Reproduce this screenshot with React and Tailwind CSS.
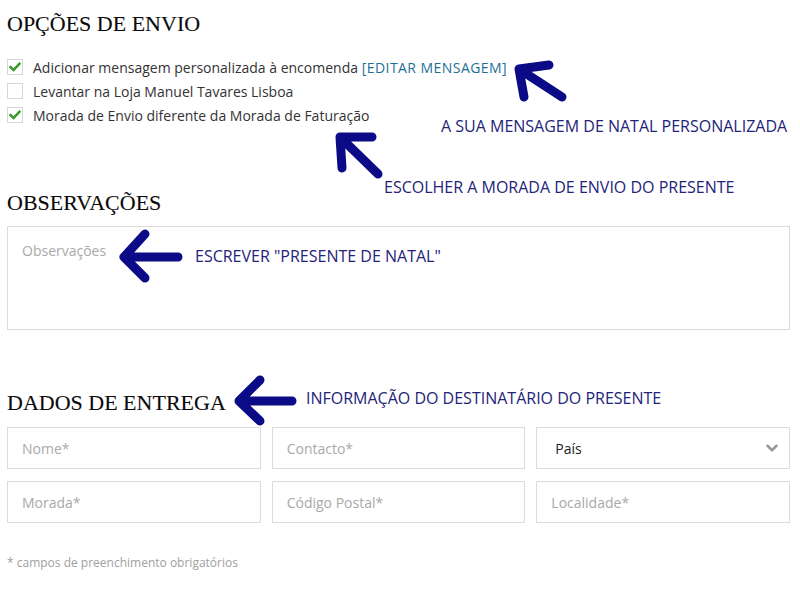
import React from 'react';
import { ChevronDown } from 'lucide-react';

const serif = { fontFamily: '"Liberation Serif", "DejaVu Serif", serif' };

const Check = () => (
  <svg width="12" height="10" viewBox="0 0 12 10">
    <path d="M1.5 5.2 L4.6 8 L10.5 1.8" fill="none" stroke="#3b9a2a" strokeWidth="2.6" strokeLinecap="square" />
  </svg>
);

const Option = ({ checked, children }) => (
  <label className="flex items-center h-[24px] gap-[10px]">
    <span className="w-[16px] h-[16px] border border-[#d6d6d6] bg-white flex items-center justify-center">
      {checked && <Check />}
    </span>
    <span>{children}</span>
  </label>
);

const Field = ({ label, dark, select }) => (
  <div className="h-[42px] border border-[#dcdcdc] flex items-center justify-between pl-[14px] pr-[8px]">
    <span className={dark ? 'text-[#222] pl-[4px]' : 'text-[#a9a9a9]'}>{label}</span>
    {select && <ChevronDown size={18} strokeWidth={3.4} className="text-[#9a9a9a]" />}
  </div>
);

const Note = ({ className, children }) => (
  <span className={'absolute whitespace-nowrap text-[#23237a] font-medium text-[16px] leading-[20px] ' + className}>{children}</span>
);

const Heading = ({ className = '', children }) => (
  <h2 className={'text-[22px] leading-[28px] text-[#0a0a0a] ' + className} style={{ ...serif, WebkitTextStroke: '0.1px #0a0a0a' }}>
    {children}
  </h2>
);

export default function App() {
  return (
    <div
      className="relative w-[800px] h-[595px] bg-white pl-[7px] pr-[10px] pt-[10px] text-[14px] text-[#333] overflow-hidden"
      style={{ fontFamily: '"Open Sans", "Noto Sans", sans-serif' }}
    >
      <Heading>OPÇÕES DE ENVIO</Heading>

      <div className="mt-[17px]">
        <Option checked>
          Adicionar mensagem personalizada à encomenda{' '}
          <span className="text-[#1f6e96] tracking-[0.45px]">[EDITAR MENSAGEM]</span>
        </Option>
        <Option>Levantar na Loja Manuel Tavares Lisboa</Option>
        <Option checked>Morada de Envio diferente da Morada de Faturação</Option>
      </div>

      <Heading className="mt-[62px]">OBSERVAÇÕES</Heading>
      <div className="mt-[9px] h-[104px] border border-[#dcdcdc] px-[14px] py-[13px] text-[#a9a9a9]">Observações</div>

      <Heading className="mt-[59px]">DADOS DE ENTREGA</Heading>
      <div className="mt-[10px] grid grid-cols-3 gap-x-[11px] gap-y-[12px]">
        <Field label="Nome*" />
        <Field label="Contacto*" />
        <Field label="País" dark select />
        <Field label="Morada*" />
        <Field label="Código Postal*" />
        <Field label="Localidade*" />
      </div>

      <p className="mt-[31px] text-[12px] leading-[18px] text-[#a0a0a0]">* campos de preenchimento obrigatórios</p>

      {/* annotations drawn over the form */}
      <svg className="absolute inset-0 pointer-events-none" width="800" height="595">
        <g fill="none" stroke="#0b0b88" strokeWidth="9" strokeLinecap="round" strokeLinejoin="round">
          <path d="M549 65 L519 69 L524 97 M519 69 L562 97" />
          <path d="M372 137 L340 137 L342 168 M340 137 L378 174" />
          <path d="M145 234 L124 257 L145 278 M124 257 L178 257" />
          <path d="M260 380 L239 401 L260 421 M239 401 L292 401" />
        </g>
      </svg>
      <Note className="left-[441px] top-[116px]">A SUA MENSAGEM DE NATAL PERSONALIZADA</Note>
      <Note className="left-[384px] top-[177px]">ESCOLHER A MORADA DE ENVIO DO PRESENTE</Note>
      <Note className="left-[195px] top-[246px]">ESCREVER "PRESENTE DE NATAL"</Note>
      <Note className="left-[306px] top-[388px]">INFORMAÇÃO DO DESTINATÁRIO DO PRESENTE</Note>
    </div>
  );
}
